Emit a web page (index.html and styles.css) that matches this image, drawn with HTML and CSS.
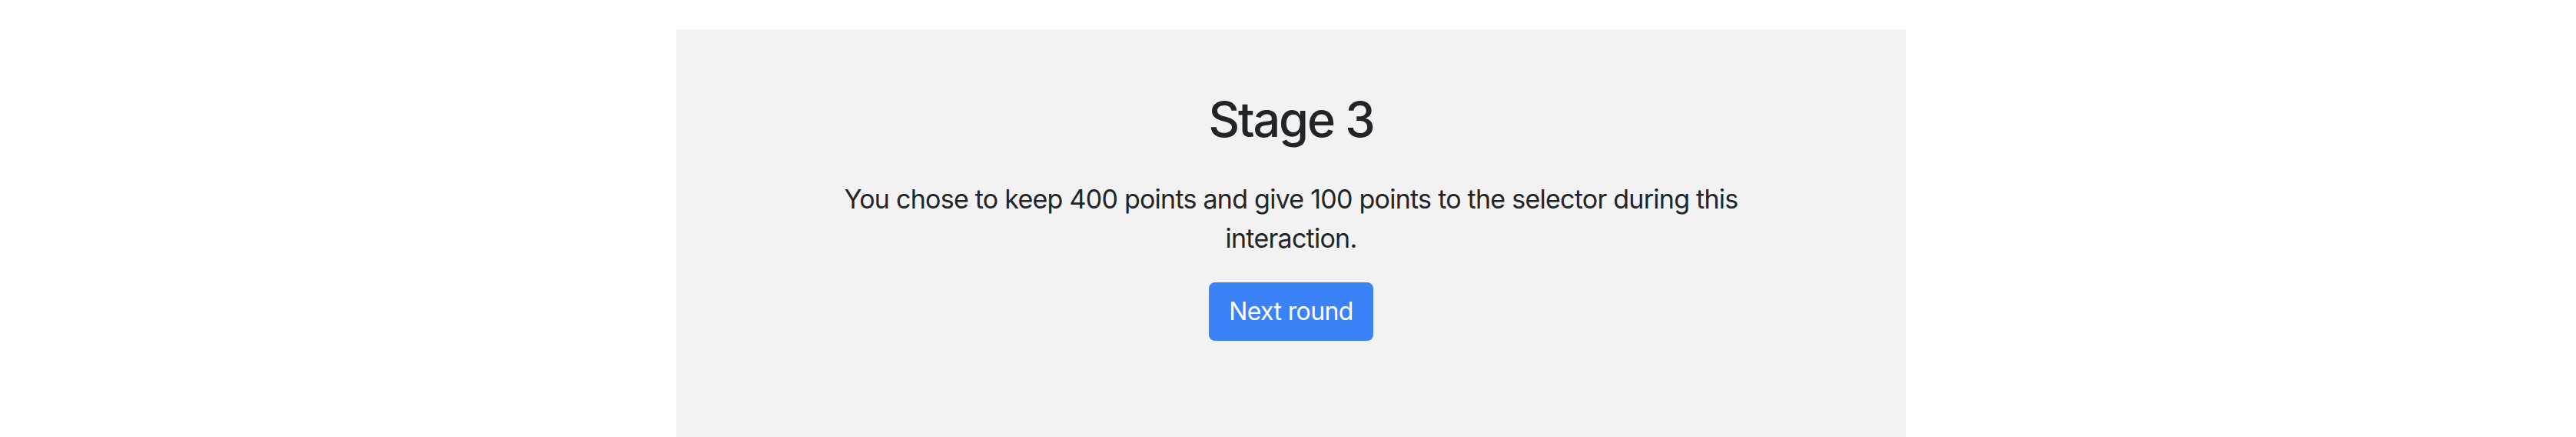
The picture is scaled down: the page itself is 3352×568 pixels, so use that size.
FILE: index.html
```html
<!DOCTYPE html>
<html lang="en">
<head>
<meta charset="utf-8">
<title>Stage 3</title>
<link rel="stylesheet" href="styles.css">
</head>
<body>
<main class="panel">
  <h1 class="title">Stage 3</h1>
  <p class="message">You chose to keep 400 points and give 100 points to the selector during this interaction.</p>
  <button class="btn-next" type="button">Next round</button>
</main>
</body>
</html>
```

FILE: styles.css
```css
html, body {
  margin: 0;
  height: 100%;
}
body {
  padding: 38px 0 0 8px;
  box-sizing: border-box;
  background: #ffffff;
  font-family: Inter, "Liberation Sans", sans-serif;
  color: #212529;
  overflow: hidden;
}
.panel {
  width: 1600px;
  margin: 0 auto;
  min-height: 600px;
  background: #f2f2f2;
  display: flex;
  flex-direction: column;
  align-items: center;
  padding-top: 80px;
  box-sizing: border-box;
}
.title {
  margin: 0;
  font-size: 63px;
  font-weight: 500;
  line-height: 1.2;
  letter-spacing: -0.035em;
}
.message {
  margin: 39px 0 0;
  max-width: 1200px;
  text-align: center;
  font-size: 34px;
  line-height: 51px;
  letter-spacing: -0.022em;
}
.btn-next {
  margin-top: 32px;
  font-family: inherit;
  font-size: 32px;
  line-height: 48px;
  letter-spacing: -0.02em;
  padding: 12px 24px;
  border: 2px solid #3b82f6;
  border-radius: 8px;
  background: #3b82f6;
  color: #ffffff;
}
```
